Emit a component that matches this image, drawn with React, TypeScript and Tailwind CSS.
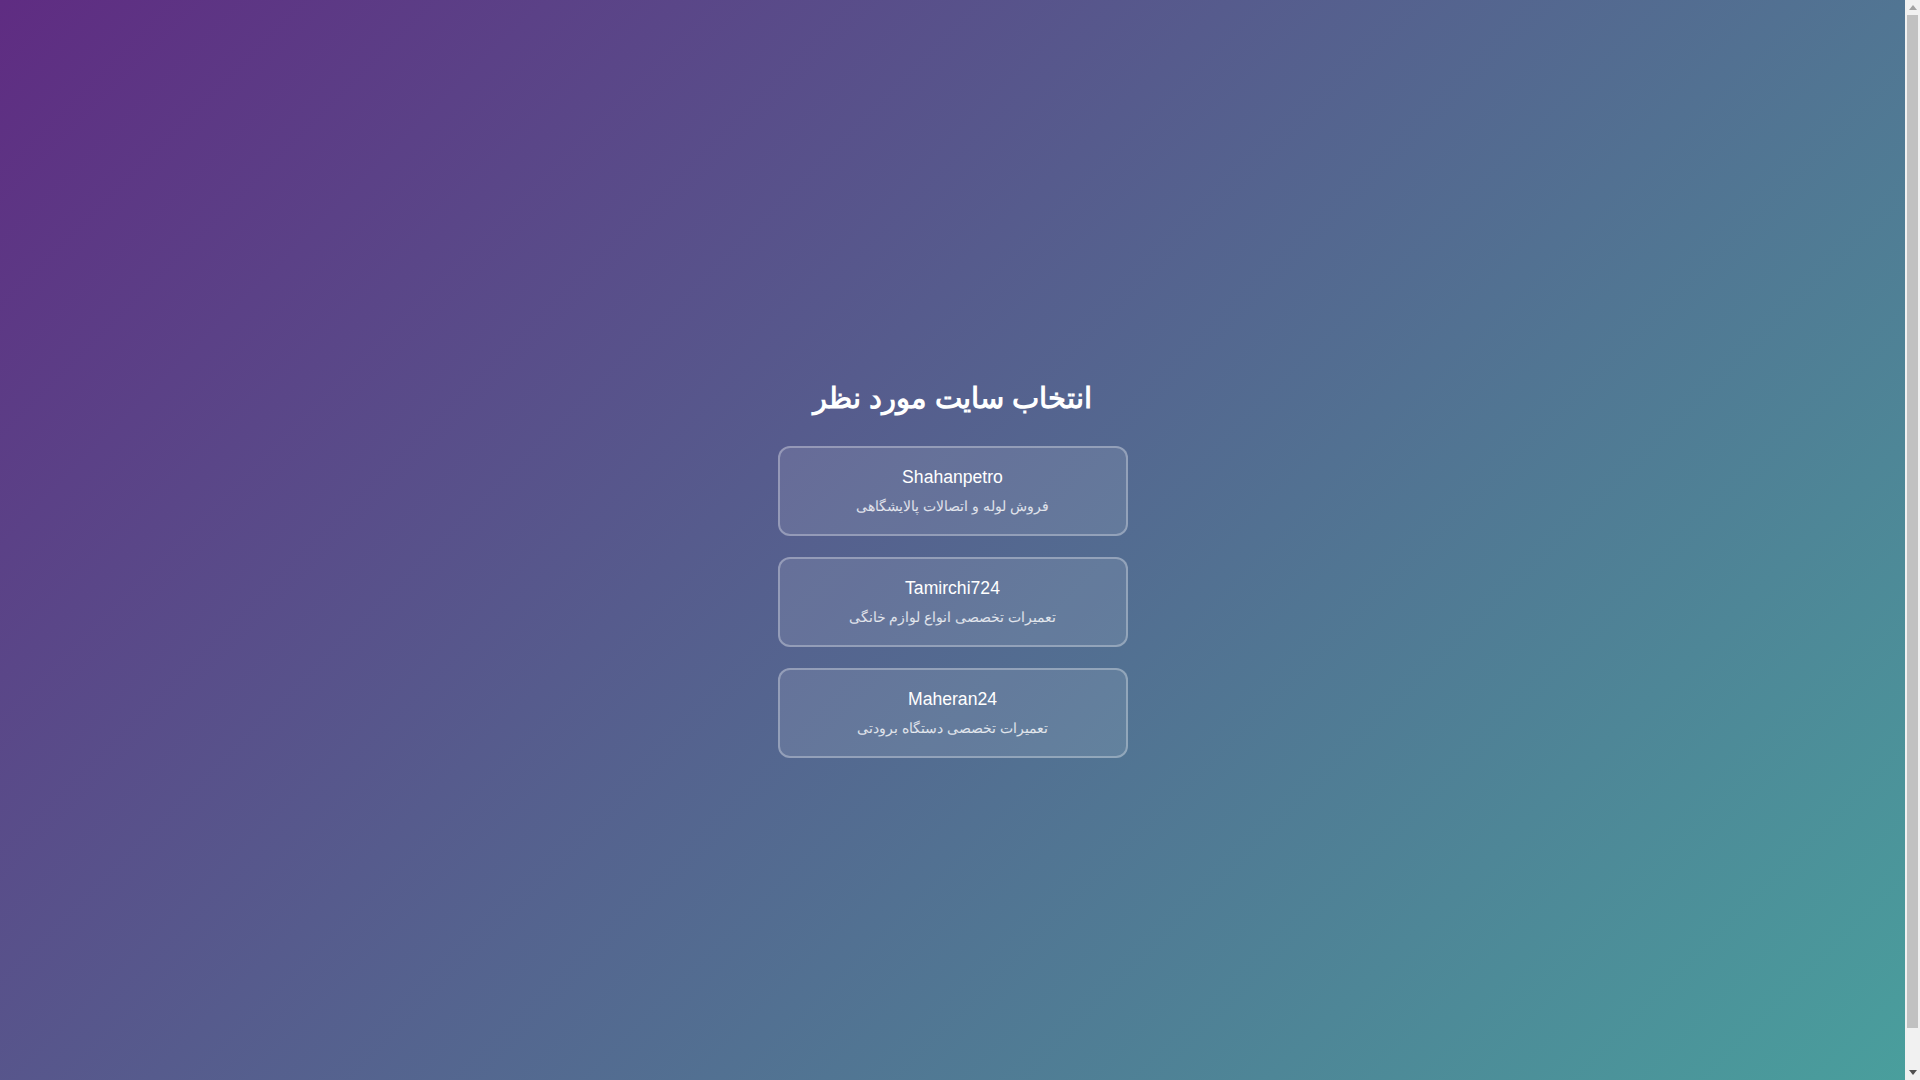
const sites = [
  { name: "Shahanpetro", desc: "فروش لوله و اتصالات پالایشگاهی" },
  { name: "Tamirchi724", desc: "تعمیرات تخصصی انواع لوازم خانگی" },
  { name: "Maheran24", desc: "تعمیرات تخصصی دستگاه برودتی" },
];

// the page is 1120px tall, so the window shows a scrollbar
function Scrollbar() {
  return (
    <div className="flex h-screen w-[15px] shrink-0 flex-col bg-[#f1f1f1]">
      <div className="flex h-[15px] items-center justify-center">
        <svg width="8" height="5" viewBox="0 0 8 5">
          <polygon points="0,5 8,5 4,0" fill="#a3a3a3" />
        </svg>
      </div>
      <div className="mx-[2px] h-[1013px] bg-[#c1c1c1]" />
      <div className="flex flex-1 items-end justify-center pb-[5px]">
        <svg width="8" height="5" viewBox="0 0 8 5">
          <polygon points="0,0 8,0 4,5" fill="#505050" />
        </svg>
      </div>
    </div>
  );
}

export default function App() {
  return (
    <div className="flex h-screen overflow-hidden">
      <div className="min-w-0 flex-1">
        <div
          dir="rtl"
          className="flex h-[1120px] items-center justify-center bg-[linear-gradient(135deg,#5f2c82,#49a09d)] text-white font-['Liberation_Sans',sans-serif]"
        >
          <div className="mt-[20px] flex w-[350px] flex-col items-center">
            <h1 className="mb-[31px] whitespace-nowrap text-[28.8px] font-bold leading-[33px]">
              انتخاب سایت مورد نظر
            </h1>
            <div className="flex w-full flex-col gap-[21px]">
              {sites.map((s) => (
                <a
                  key={s.name}
                  href="#"
                  className="block rounded-xl border-2 border-white/30 bg-white/10 px-4 pb-[20px] pt-[19px] text-center"
                >
                  <div className="text-[17.6px] leading-[21px]">{s.name}</div>
                  <div className="mt-[10px] text-[14.4px] leading-[16px] text-white/80">{s.desc}</div>
                </a>
              ))}
            </div>
          </div>
        </div>
      </div>
      <Scrollbar />
    </div>
  );
}
